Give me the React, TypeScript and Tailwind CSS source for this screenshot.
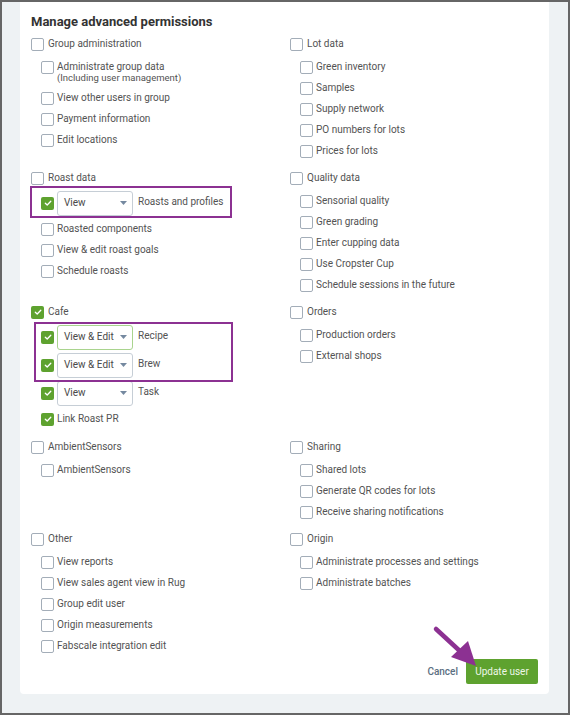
import React from "react";

const FONT = { fontFamily: "Roboto, 'Noto Sans', sans-serif" };

function Box({ checked = false }: { checked?: boolean }) {
  if (checked) {
    return (
      <div className="w-[13px] h-[13px] shrink-0 rounded-[2px] bg-[#5ea22f] flex items-center justify-center">
        <svg width="8" height="8" viewBox="0 0 8 8">
          <path d="M1.3 4.2 L3.2 6 L6.8 2.2" fill="none" stroke="#ffffff" strokeWidth="1.3" strokeLinecap="round" strokeLinejoin="round" />
        </svg>
      </div>
    );
  }
  return <div className="w-[13px] h-[13px] shrink-0 rounded-[2px] border border-[#a3adb8] bg-white" />;
}

function Header({ label, checked = false }: { label: string; checked?: boolean }) {
  return (
    <div className="h-[21px] flex items-center gap-[4px]">
      <Box checked={checked} />
      <span className="text-[10px] text-[#535353] leading-[12px]">{label}</span>
    </div>
  );
}

function Sub({ label, checked = false }: { label: string; checked?: boolean }) {
  return (
    <div className="h-[21px] flex items-center gap-[3px]">
      <Box checked={checked} />
      <span className="text-[10px] text-[#535353] leading-[12px]">{label}</span>
    </div>
  );
}

function SelectRow({ value, label, focused = false }: { value: string; label: string; focused?: boolean }) {
  return (
    <div className="h-[25px] flex items-center">
      <Box checked />
      <div
        className={
          "ml-[3px] w-[76px] h-[25px] rounded-[3px] border bg-white flex items-center justify-between pl-[6px] pr-[5px] " +
          (focused ? "border-[#a9d48e]" : "border-[#c6ced6]")
        }
      >
        <span className="text-[10px] text-[#4a4a4a] leading-[12px]">{value}</span>
        <svg width="7" height="4" viewBox="0 0 7 4">
          <path d="M0 0 L7 0 L3.5 4 Z" fill="#7589a0" />
        </svg>
      </div>
      <span className="ml-[5px] -mt-[3px] text-[10px] text-[#535353] leading-[12px]">{label}</span>
    </div>
  );
}

function SubList({ children }: { children: React.ReactNode }) {
  return <div className="mt-[2px] pl-[10px] flex flex-col">{children}</div>;
}

function Section({ title, items, checked = false }: { title: string; items: string[]; checked?: boolean }) {
  return (
    <div>
      <Header label={title} checked={checked} />
      <SubList>
        {items.map((i) => (
          <Sub key={i} label={i} />
        ))}
      </SubList>
    </div>
  );
}

export default function App() {
  return (
    <div style={FONT} className="relative w-[570px] h-[715px] border-2 border-[#666666] bg-[#eef2f4] overflow-hidden">
      <div className="ml-[18px] w-[529px] bg-white rounded-b-[4px] px-[11px] pt-[12px] pb-[10px]">
        <h1 className="text-[13px] font-bold leading-[16px] text-[#333333] mb-[3.5px]">Manage advanced permissions</h1>

        <div className="grid grid-cols-[259px_1fr] gap-y-[6px]">
          {/* Row 1 */}
          <div>
            <Header label="Group administration" />
            <SubList>
              <div className="h-[31px] flex flex-col">
                <div className="h-[21px] flex items-center gap-[3px]">
                  <Box />
                  <span className="text-[10px] text-[#535353] leading-[12px]">Administrate group data</span>
                </div>
                <span className="-mt-[5px] pl-[16px] text-[9.5px] text-[#535353] leading-[10px]">(Including user management)</span>
              </div>
              <Sub label="View other users in group" />
              <Sub label="Payment information" />
              <Sub label="Edit locations" />
            </SubList>
          </div>
          <Section title="Lot data" items={["Green inventory", "Samples", "Supply network", "PO numbers for lots", "Prices for lots"]} />

          {/* Row 2 */}
          <div>
            <Header label="Roast data" />
            <SubList>
              <div className="relative mb-[3px]">
                <SelectRow value="View" label="Roasts and profiles" />
                <div className="pointer-events-none absolute left-[-11px] top-[-5px] w-[202px] h-[32px] border-2 border-[#8c3192]" />
              </div>
              <Sub label="Roasted components" />
              <Sub label="View & edit roast goals" />
              <Sub label="Schedule roasts" />
            </SubList>
          </div>
          <Section
            title="Quality data"
            items={["Sensorial quality", "Green grading", "Enter cupping data", "Use Cropster Cup", "Schedule sessions in the future"]}
          />

          {/* Row 3 */}
          <div>
            <Header label="Cafe" checked />
            <SubList>
              <div className="flex flex-col gap-[3px]">
                <div className="relative flex flex-col gap-[3px]">
                  <SelectRow value="View & Edit" label="Recipe" focused />
                  <SelectRow value="View & Edit" label="Brew" />
                  <div className="pointer-events-none absolute left-[-7px] top-[-3px] w-[199px] h-[60px] border-2 border-[#8c3192]" />
                </div>
                <SelectRow value="View" label="Task" />
              </div>
              <div className="mt-[3px]">
                <Sub label="Link Roast PR" checked />
              </div>
            </SubList>
          </div>
          <Section title="Orders" items={["Production orders", "External shops"]} />

          {/* Row 4 */}
          <div className="mt-[1px]">
            <Section title="AmbientSensors" items={["AmbientSensors"]} />
          </div>
          <div className="mt-[1px]">
            <Section title="Sharing" items={["Shared lots", "Generate QR codes for lots", "Receive sharing notifications"]} />
          </div>

          {/* Row 5 */}
          <Section
            title="Other"
            items={["View reports", "View sales agent view in Rug", "Group edit user", "Origin measurements", "Fabscale integration edit"]}
          />
          <Section title="Origin" items={["Administrate processes and settings", "Administrate batches"]} />
        </div>

        <div className="mt-[2px] flex justify-end items-center gap-[8px]">
          <span className="text-[10px] font-medium text-[#5b6f82]">Cancel</span>
          <div className="h-[25px] w-[72px] rounded-[2px] bg-[#5ea22f] flex items-center justify-center">
            <span className="text-[10px] text-[#eef7e8]">Update user</span>
          </div>
        </div>
      </div>

      <svg className="pointer-events-none absolute -left-[2px] -top-[2px]" width="570" height="715" viewBox="0 0 570 715">
        <line x1="436" y1="629" x2="462" y2="653" stroke="#8c3192" strokeWidth="4.5" strokeLinecap="round" />
        <polygon points="476,666 451,657 468,641" fill="#8c3192" />
      </svg>
    </div>
  );
}
